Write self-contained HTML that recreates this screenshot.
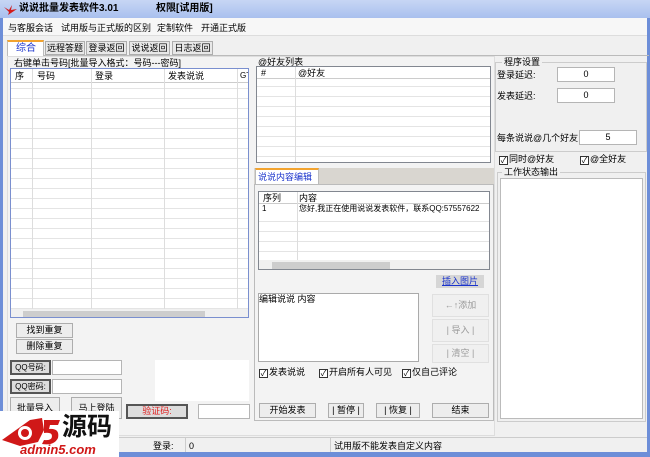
<!DOCTYPE html>
<html><head><meta charset="utf-8"><style>
*{box-sizing:border-box;margin:0;padding:0}
body{width:650px;height:457px;overflow:hidden;background:#6d8ed8;font-family:"Liberation Sans","Noto Sans CJK SC",sans-serif;font-size:9px;color:#000;position:relative}
.a{position:absolute}
.w{background:#fff}
.btn{position:absolute;background:#ededed;border:1px solid #adadad;text-align:center;font-size:9px;line-height:13px;white-space:nowrap;overflow:hidden}
.dis{color:#9a9a9a;background:#f0f0f0;border-color:#e0e0e0}
.inp{position:absolute;background:#fff;border:1px solid #b5b5b5;text-align:center;font-size:9px;line-height:13px}
.grid{position:absolute;background:#fff;border:1px solid #828790;overflow:hidden}
.cb{display:inline-block;width:9px;height:9px;border:1px solid #333;background:#fff;font-size:8px;line-height:7px;text-align:center;vertical-align:-1px;margin-right:1px}
.t{position:absolute;white-space:nowrap;font-size:9px;line-height:12px}
</style></head><body>
<div class="a" style="left:0;top:0;width:650px;height:18px;background:linear-gradient(#c7d6f4,#a9c0ee)"></div>
<svg class="a" style="left:4px;top:4px" width="13" height="11"><path d="M0 3 L5 6 L8 1 L7 6 L13 5 L7 9 L4 11 L5 8 Z" fill="#d21a1a"/></svg>
<div class="t" style="left:19px;top:3px;font-weight:bold;font-size:10px">说说批量发表软件3.01</div>
<div class="t" style="left:156px;top:3px;font-weight:bold;font-size:10px">权限[试用版]</div>
<div class="a" style="left:3px;top:18px;width:644px;height:434px;background:#f0f0f0"></div>
<div class="a" style="left:3px;top:18px;width:644px;height:18px;background:#f7f7f7;border-bottom:1px solid #ddd"></div>
<div class="t" style="left:8px;top:22px">与客服会话</div>
<div class="t" style="left:61px;top:22px">试用版与正式版的区别</div>
<div class="t" style="left:157px;top:22px">定制软件</div>
<div class="t" style="left:201px;top:22px">开通正式版</div>
<!-- tabs -->
<div class="a" style="left:7px;top:55px;width:642px;height:1px;background:#bbb"></div>
<div class="a" style="left:7px;top:40px;width:37px;height:16px;background:#fff;border:1px solid #bbb;border-top:2px solid #f2a32f;border-bottom:none"></div>
<div class="t" style="left:16px;top:43px;color:#1a33cc;font-size:10px">综合</div>
<div class="btn" style="left:45px;top:41px;width:40px;height:14px;background:#e8e8e8">远程答题</div>
<div class="btn" style="left:86px;top:41px;width:41px;height:14px;background:#e8e8e8">登录返回</div>
<div class="btn" style="left:129px;top:41px;width:41px;height:14px;background:#e8e8e8">说说返回</div>
<div class="btn" style="left:172px;top:41px;width:41px;height:14px;background:#e8e8e8">日志返回</div>
<div class="a" style="left:7px;top:56px;width:488px;height:380px;background:#f3f3f3;border:1px solid #ddd"></div>
<!-- left -->
<div class="t" style="left:14px;top:57px">右键单击号码[批量导入格式：号码---密码]</div>
<div class="grid" style="left:10px;top:68px;width:239px;height:250px;border-color:#7a8fcf;background:#fff repeating-linear-gradient(#fff 0 9px,#e4e4e4 9px 10px)">
<div class="a" style="left:0;top:0;width:239px;height:14px;background:#fff;border-bottom:1px solid #ccc"></div>
<div class="t" style="left:4px;top:1px">序</div><div class="t" style="left:26px;top:1px">号码</div><div class="t" style="left:84px;top:1px">登录</div><div class="t" style="left:157px;top:1px">发表说说</div><div class="t" style="left:229px;top:1px;font-size:8px">GT</div>
<div class="a" style="left:21px;top:0;width:1px;height:240px;background:#ddd"></div>
<div class="a" style="left:80px;top:0;width:1px;height:240px;background:#ddd"></div>
<div class="a" style="left:153px;top:0;width:1px;height:240px;background:#ddd"></div>
<div class="a" style="left:226px;top:0;width:1px;height:240px;background:#ddd"></div>
<div class="a" style="left:0;top:240px;width:239px;height:10px;background:#f0f0f0"></div>
<div class="a" style="left:12px;top:242px;width:182px;height:6px;background:#cdcdcd"></div>
</div>
<div class="btn" style="left:16px;top:323px;width:57px;height:15px">找到重复</div>
<div class="btn" style="left:16px;top:339px;width:57px;height:15px">删除重复</div>
<div class="btn" style="left:10px;top:360px;width:41px;height:15px;border:2px solid #555;background:#ddd;line-height:11px;font-size:8px">QQ号码:</div>
<div class="inp" style="left:52px;top:360px;width:70px;height:15px"></div>
<div class="btn" style="left:10px;top:379px;width:41px;height:15px;border:2px solid #555;background:#ddd;line-height:11px;font-size:8px">QQ密码:</div>
<div class="inp" style="left:52px;top:379px;width:70px;height:15px"></div>
<div class="w a" style="left:155px;top:360px;width:94px;height:41px"></div>
<div class="btn" style="left:10px;top:397px;width:50px;height:22px;line-height:20px">批量导入</div>
<div class="btn" style="left:71px;top:397px;width:51px;height:22px;line-height:20px">马上登陆</div>
<div class="btn" style="left:126px;top:404px;width:62px;height:15px;border:2px solid #555;background:#ddd;color:#e02020;line-height:11px">验证码:</div>
<div class="inp" style="left:198px;top:404px;width:52px;height:15px"></div>
<!-- middle -->
<div class="t" style="left:258px;top:56px">@好友列表</div>
<div class="grid" style="left:256px;top:66px;width:235px;height:97px;background:#fff repeating-linear-gradient(#fff 0 9px,#e4e4e4 9px 10px)">
<div class="a" style="left:0;top:0;width:235px;height:12px;background:#fff;border-bottom:1px solid #ccc"></div>
<div class="t" style="left:4px;top:0">#</div><div class="t" style="left:41px;top:0">@好友</div>
<div class="a" style="left:38px;top:0;width:1px;height:97px;background:#ddd"></div>
</div>
<div class="a" style="left:254px;top:168px;width:240px;height:16px;background:#d9d6d0"></div>
<div class="a" style="left:255px;top:168px;width:64px;height:17px;background:#fff;border:1px solid #bbb;border-top:2px solid #f2a32f;border-bottom:none"></div>
<div class="t" style="left:258px;top:171px;color:#1a33cc">说说内容编辑</div>
<div class="a" style="left:254px;top:184px;width:240px;height:237px;border:1px solid #bbb;background:#f3f3f3"></div>
<div class="grid" style="left:258px;top:191px;width:232px;height:79px;background:#fff repeating-linear-gradient(#fff 0 9px,#e4e4e4 9px 10px)">
<div class="a" style="left:0;top:0;width:232px;height:12px;background:#fff;border-bottom:1px solid #ccc"></div>
<div class="t" style="left:4px;top:0">序列</div><div class="t" style="left:40px;top:0">内容</div>
<div class="a" style="left:0;top:12px;width:232px;height:10px;background:#fff"></div>
<div class="t" style="left:3px;top:11px;font-size:8px">1</div><div class="t" style="left:40px;top:11px;font-size:8px">您好,我正在使用说说发表软件，联系QQ:57557622</div>
<div class="a" style="left:38px;top:0;width:1px;height:68px;background:#ddd"></div>
<div class="a" style="left:0;top:68px;width:232px;height:11px;background:#f0f0f0"></div>
<div class="a" style="left:13px;top:70px;width:118px;height:7px;background:#cdcdcd"></div>
</div>
<div class="a" style="left:436px;top:275px;width:48px;height:13px;background:#d6d6d6"></div>
<div class="t" style="left:442px;top:275px;color:#1a33cc;text-decoration:underline">插入图片</div>
<div class="w a" style="left:258px;top:293px;width:161px;height:69px;border:1px solid #aaa"></div>
<div class="t" style="left:259px;top:293px">编辑说说 内容</div>
<div class="btn dis" style="left:432px;top:294px;width:57px;height:23px;line-height:21px">←↑添加</div>
<div class="btn dis" style="left:432px;top:319px;width:57px;height:23px;line-height:21px">| 导入 |</div>
<div class="btn dis" style="left:432px;top:344px;width:57px;height:19px;line-height:17px">| 清空 |</div>
<div class="t" style="left:259px;top:366px"><span class="cb">✓</span>发表说说</div>
<div class="t" style="left:319px;top:366px"><span class="cb">✓</span>开启所有人可见</div>
<div class="t" style="left:402px;top:366px"><span class="cb">✓</span>仅自己评论</div>
<div class="btn" style="left:259px;top:403px;width:57px;height:15px">开始发表</div>
<div class="btn" style="left:328px;top:403px;width:36px;height:15px">| 暂停 |</div>
<div class="btn" style="left:376px;top:403px;width:44px;height:15px">| 恢复 |</div>
<div class="btn" style="left:432px;top:403px;width:57px;height:15px">结束</div>
<!-- right -->
<div class="a" style="left:495px;top:62px;width:152px;height:90px;border:1px solid #ccc"></div>
<div class="t" style="left:502px;top:56px;background:#f0f0f0;padding:0 2px">程序设置</div>
<div class="t" style="left:497px;top:69px">登录延迟:</div>
<div class="inp" style="left:557px;top:67px;width:58px;height:15px">0</div>
<div class="t" style="left:497px;top:90px">发表延迟:</div>
<div class="inp" style="left:557px;top:88px;width:58px;height:15px">0</div>
<div class="t" style="left:497px;top:132px">每条说说@几个好友</div>
<div class="inp" style="left:579px;top:130px;width:58px;height:15px">5</div>
<div class="t" style="left:499px;top:153px"><span class="cb">✓</span>同时@好友</div>
<div class="t" style="left:580px;top:153px"><span class="cb">✓</span>@全好友</div>
<div class="a" style="left:497px;top:172px;width:149px;height:250px;border:1px solid #ccc"></div>
<div class="t" style="left:502px;top:166px;background:#f0f0f0;padding:0 2px">工作状态输出</div>
<div class="w a" style="left:500px;top:178px;width:143px;height:241px;border:1px solid #bbb"></div>
<!-- status -->
<div class="a" style="left:3px;top:437px;width:644px;height:15px;background:#f0f0f0;border-top:1px solid #ccc"></div>
<div class="a" style="left:185px;top:438px;width:1px;height:14px;background:#ccc"></div>
<div class="a" style="left:330px;top:438px;width:1px;height:14px;background:#ccc"></div>
<div class="t" style="left:153px;top:440px">登录:</div>
<div class="t" style="left:189px;top:440px">0</div>
<div class="t" style="left:334px;top:440px">试用版不能发表自定义内容</div>
<!-- logo -->
<div class="a" style="left:0;top:411px;width:119px;height:46px;background:#fff"></div>
<svg class="a" style="left:0;top:412px" width="119" height="45">
<path d="M2 28 L30 8 L42 6 L44 18 L38 30 L20 34 Z" fill="#d01818"/>
<circle cx="25" cy="21" r="7" fill="#fff"/><circle cx="25" cy="21" r="4" fill="#d01818"/>
<path d="M44 8 L60 8 L58 13 L50 13 L49 17 Q60 16 58 26 Q54 34 42 32 L44 28 Q52 29 52 24 Q52 20 44 21 Z" fill="#d01818"/>
</svg>
<div class="t" style="left:62px;top:411px;font-size:25px;line-height:28px;font-weight:bold;color:#111;font-family:'Noto Sans CJK SC',sans-serif">源码</div>
<div class="t" style="left:20px;top:443px;font-size:13px;line-height:13px;font-weight:bold;color:#d01818;font-style:italic">admin5.com</div>
</body></html>
